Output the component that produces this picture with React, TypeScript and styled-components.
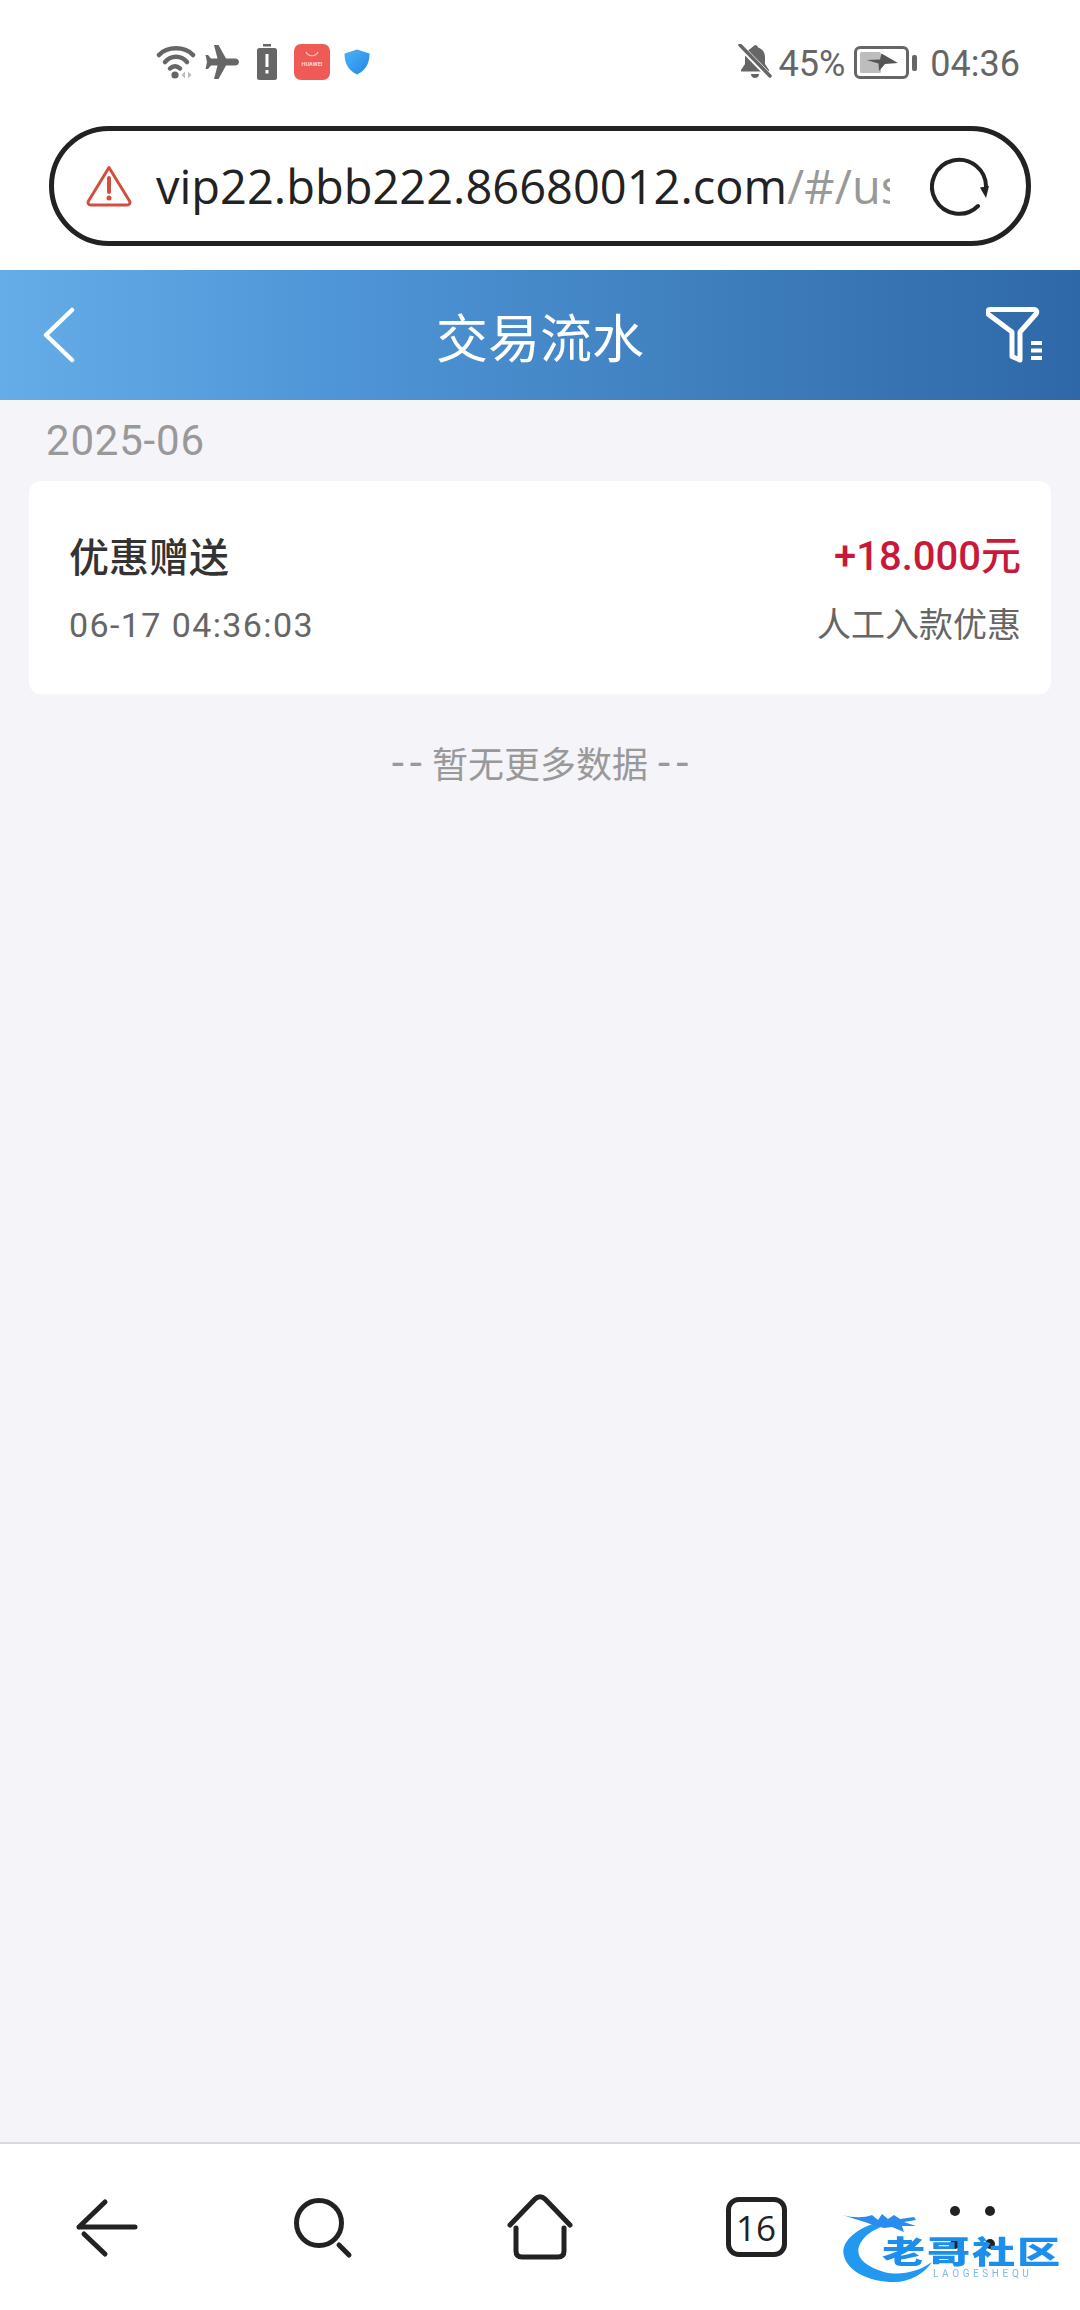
import React from 'react';
import styled, { createGlobalStyle } from 'styled-components';

const GlobalStyle = createGlobalStyle`
  html, body {
    margin: 0;
    padding: 0;
    background: #fff;
  }
  * {
    box-sizing: border-box;
  }
`;

const CJK = `Roboto, "Noto Sans CJK SC", sans-serif`;

const Page = styled.div`
  position: relative;
  width: 1080px;
  height: 2310px;
  display: flex;
  flex-direction: column;
  background: #f4f4f9;
  overflow: hidden;
  font-family: ${CJK};
`;

const StatusBar = styled.div`
  height: 126px;
  flex: none;
  background: #fff;
  display: flex;
  align-items: flex-start;
  justify-content: space-between;
  padding: 40px 60px 0 156px;
`;

const StatusGroup = styled.div`
  display: flex;
  align-items: center;
  height: 44px;
`;

const IconSlot = styled.span<{ $left: number }>`
  display: flex;
  margin-left: ${p => p.$left}px;
`;

const StatusText = styled.span<{ $left: number }>`
  margin: 4px 0 0 ${p => p.$left}px;
  font-size: 36px;
  line-height: 44px;
  color: #666;
`;

const BrowserBar = styled.div`
  height: 144px;
  flex: none;
  background: #fff;
  padding: 0 49px;
`;

const UrlBox = styled.div`
  height: 120px;
  border: 5px solid #222;
  border-radius: 60px;
  display: flex;
  align-items: center;
  padding: 0 36px 0 32px;
`;

const UrlText = styled.div`
  width: 734px;
  margin-left: 24px;
  overflow: hidden;
  white-space: nowrap;
  font-family: "Open Sans", sans-serif;
  font-size: 47px;
  line-height: 60px;
  color: #222;
`;

const UrlPath = styled.span`
  color: #999;
`;

const Reload = styled.div`
  margin-left: auto;
  display: flex;
`;

const Header = styled.header`
  height: 130px;
  flex: none;
  display: grid;
  grid-template-columns: 1fr auto 1fr;
  align-items: center;
  padding: 0 34px;
  background: linear-gradient(90deg, #65ade8 0%, #4f96d8 30%, #3f7fbe 65%, #2f68a8 100%);
`;

const HeaderSide = styled.div<{ $end?: boolean }>`
  display: flex;
  justify-content: ${p => (p.$end ? 'flex-end' : 'flex-start')};
  padding-left: ${p => (p.$end ? 0 : 8)}px;
`;

const HeaderTitle = styled.h1`
  margin: 0;
  font-size: 52px;
  font-weight: 400;
  color: #fff;
`;

const Main = styled.main`
  flex: 1;
  padding: 0 29px;
`;

const MonthLabel = styled.div`
  height: 81px;
  padding: 17px 0 0 17px;
  font-size: 42px;
  line-height: 48px;
  letter-spacing: 0.8px;
  color: #999;
`;

const Card = styled.div`
  height: 213px;
  padding: 5px 30px 0 40px;
  background: #fff;
  border-radius: 12px;
  display: flex;
  flex-direction: column;
  justify-content: center;
  gap: 17px;
`;

const CardRow = styled.div`
  display: flex;
  align-items: center;
  justify-content: space-between;
`;

const TxTitle = styled.span`
  font-size: 40px;
  line-height: 52px;
  font-weight: 500;
  color: #333;
`;

const TxAmount = styled.span`
  margin-top: -3px;
  font-size: 40px;
  line-height: 52px;
  font-weight: 500;
  color: #c9193a;
`;

const TxTime = styled.span`
  font-size: 34px;
  line-height: 46px;
  letter-spacing: 1.4px;
  color: #666;
`;

const TxMeta = styled.span`
  font-size: 34px;
  line-height: 46px;
  color: #666;
`;

const EndNote = styled.div`
  margin-top: 45px;
  display: flex;
  justify-content: center;
  align-items: baseline;
  gap: 4px;
  font-size: 36px;
  line-height: 48px;
  color: #999;
`;

const Dashes = styled.span`
  font-size: 44px;
  letter-spacing: 6px;

  &:last-child {
    margin: 0 -6px 0 6px;
  }
`;

const BottomNav = styled.nav`
  height: 168px;
  flex: none;
  background: #fff;
  border-top: 2px solid #d9d9d9;
  display: grid;
  grid-template-columns: repeat(5, 1fr);
  align-items: center;
  justify-items: center;
`;

const NavItem = styled.div`
  width: 70px;
  height: 70px;
  display: flex;
  align-items: center;
  justify-content: center;
`;

const TabCount = styled.div`
  width: 61px;
  height: 60px;
  border: 5px solid #222;
  border-radius: 13px;
  display: flex;
  align-items: center;
  justify-content: center;
  font-family: "Open Sans", sans-serif;
  font-size: 35px;
  color: #222;
`;

const MoreDots = styled.div`
  width: 45px;
  height: 43px;
  display: grid;
  grid-template-columns: 10px 10px;
  grid-template-rows: 10px 10px;
  justify-content: space-between;
  align-content: space-between;
`;

const Dot = styled.span`
  background: #222;
  border-radius: 50%;
`;

const Watermark = styled.div`
  position: absolute;
  left: 840px;
  top: 2212px;
  width: 230px;
  height: 72px;
  filter: blur(0.5px);
`;

const WatermarkTitle = styled.div`
  position: absolute;
  left: 42px;
  top: 22px;
  font-family: "Noto Sans CJK SC", sans-serif;
  font-size: 36px;
  line-height: 36px;
  font-weight: 900;
  letter-spacing: 1.500px;
  white-space: nowrap;
  color: #1c8fee;
  transform: scale(1.2, 0.85);
  transform-origin: left top;
`;

const WatermarkSub = styled.div`
  position: absolute;
  left: 93px;
  top: 56px;
  font-family: Roboto, sans-serif;
  font-size: 10px;
  line-height: 12px;
  letter-spacing: 3.6px;
  white-space: nowrap;
  color: #7fb8ea;
`;

const WatermarkDragon = styled.svg`
  position: absolute;
  left: 0;
  top: 0;
`;

const WifiIcon = () => (
  <svg width="40" height="36" viewBox="0 0 40 36" fill="none">
    <path d="M3 11C11 2 29 2 37 11" stroke="#666" strokeWidth="4.5" strokeLinecap="round" />
    <path d="M9 18C15 11 25 11 31 18" stroke="#666" strokeWidth="4.5" strokeLinecap="round" />
    <path d="M14 24.500C17 21.500 21 21.500 24 24.500" stroke="#666" strokeWidth="4.500" strokeLinecap="round" />
    <circle cx="19" cy="31" r="3.600" fill="#666" />
    <path d="M29 27.500l-3.500 3.500 3.500 3.500zM32 27.500l3.500 3.500-3.500 3.500z" fill="#bbb" />
  </svg>
);

const PlaneIcon = () => (
  <svg width="34" height="34" viewBox="0 0 34 34">
    <path d="M9 0h4.500l7.500 13.500h9c2.500 0 4 1.800 4 3.500s-1.500 3.500-4 3.500h-9L13.500 34H9l3.500-13.500H6L3 24H0.500L2 17 0.500 10H3l3 3.500h6.500z" fill="#666" />
  </svg>
);

const BatteryAlert = () => (
  <svg width="20" height="36" viewBox="0 0 20 36">
    <rect x="6" y="0" width="8" height="2.500" fill="#666" />
    <rect x="0" y="4" width="20" height="32" rx="2.500" fill="#666" />
    <rect x="8.500" y="10" width="3" height="13" fill="#fff" />
    <rect x="8.500" y="26" width="3" height="3.500" fill="#fff" />
  </svg>
);

const HuaweiBadge = () => (
  <svg width="36" height="36" viewBox="0 0 36 36">
    <rect width="36" height="36" rx="7" fill="#ef5a56" />
    <path d="M12 8c2 5 10 5 12 0" stroke="#f9c9c6" strokeWidth="1.200" fill="none" />
    <text x="18" y="22" textAnchor="middle" fontSize="5.600" fontWeight="700" fontFamily="Roboto, sans-serif" fill="#fbd5d3">
      HUAWEI
    </text>
  </svg>
);

const ShieldIcon = () => (
  <svg width="26" height="26" viewBox="0 0 26 26">
    <defs>
      <linearGradient id="shield" x1="0" y1="0" x2="1" y2="1">
        <stop offset="0" stopColor="#4fb3f5" />
        <stop offset="1" stopColor="#1f86e8" />
      </linearGradient>
    </defs>
    <path d="M13 0.500L25.500 4.500C25.500 14 22 21 13 25.500 4 21 0.500 14 0.500 4.500z" fill="url(#shield)" />
  </svg>
);

const MutedBell = () => (
  <svg width="34" height="36" viewBox="0 0 34 36" fill="none">
    <path d="M17 1c1.600 0 2.800 1 3 2.500 4.500 1.300 7 5 7 9.500v7l4 6v1.500H3V26l4-6v-7c0-1.800.4-3.500 1.200-5z" fill="#666" />
    <path d="M13 30h8c0 2.500-1.800 4-4 4s-4-1.500-4-4z" fill="#666" />
    <path d="M2 2l30 31" stroke="#fff" strokeWidth="6" />
    <path d="M2 1l30 31" stroke="#666" strokeWidth="3.500" strokeLinecap="round" />
  </svg>
);

const ChargingBattery = () => (
  <svg width="64" height="33" viewBox="0 0 64 33" fill="none">
    <rect x="1.500" y="1.500" width="52" height="30" rx="4.500" stroke="#666" strokeWidth="3" />
    <rect x="6" y="6" width="21" height="21" rx="1.500" fill="#bdbdbd" />
    <path d="M12.500 14L26 13.500 27.500 7.500 44 17 31 18 25 25 24.500 17.500z" fill="#555" />
    <rect x="58" y="9" width="5" height="16" rx="2" fill="#666" />
  </svg>
);

const WarnIcon = () => (
  <svg width="46" height="42" viewBox="0 0 46 42" fill="none">
    <path d="M23 2.500L43.500 36c1.200 2-.2 4-2.300 4H4.800c-2.100 0-3.500-2-2.300-4z" stroke="#d24f3f" strokeWidth="3" strokeLinejoin="round" />
    <path d="M23 13v14" stroke="#d24f3f" strokeWidth="4" strokeLinecap="round" />
    <circle cx="23" cy="33" r="2.500" fill="#d24f3f" />
  </svg>
);

const ReloadIcon = () => (
  <svg width="60" height="60" viewBox="0 0 60 60" fill="none">
    <path d="M48 50A27 27 0 1 1 56 32" stroke="#222" strokeWidth="4" strokeLinecap="round" />
    <path d="M50 31.500L59 30 56 42z" fill="#222" />
  </svg>
);

const BackChevron = () => (
  <svg width="34" height="56" viewBox="0 0 34 56" fill="none">
    <path d="M30 3L4 28l26 25" stroke="#fff" strokeWidth="4.500" strokeLinecap="round" strokeLinejoin="round" />
  </svg>
);

const FilterIcon = () => (
  <svg width="60" height="58" viewBox="0 0 60 58" fill="none">
    <path d="M5 2.500h44c2.500 0 3.500 2.500 2 4.500L35 25v28l-8-3.500V25L3 7c-1.500-2 0-4.500 2-4.500z" stroke="#fff" strokeWidth="5" strokeLinejoin="round" transform="translate(-1 1)" />
    <path d="M45 37h11M45 44.500h11M45 52h11" stroke="#fff" strokeWidth="4" />
  </svg>
);

const NavBack = () => (
  <svg width="70" height="70" viewBox="0 0 70 70" fill="none">
    <path d="M6 35h56M6 35L32 10M11 42l21 20" stroke="#222" strokeWidth="5" strokeLinecap="round" />
  </svg>
);

const NavSearch = () => (
  <svg width="70" height="70" viewBox="0 0 70 70" fill="none">
    <circle cx="30" cy="31" r="22.500" stroke="#222" strokeWidth="5" />
    <path d="M50 53l10 10" stroke="#222" strokeWidth="5" strokeLinecap="round" />
  </svg>
);

const NavHome = () => (
  <svg width="70" height="70" viewBox="0 0 70 70" fill="none">
    <path d="M5 33L30 7c3-3 7-3 10 0l25 26" stroke="#222" strokeWidth="5" strokeLinecap="round" />
    <path d="M11 36v23c0 4 2 6 6 6h36c4 0 6-2 6-6V36" stroke="#222" strokeWidth="5" strokeLinecap="round" />
  </svg>
);

const DragonSwoosh = () => (
  <WatermarkDragon width="120" height="72" viewBox="0 0 120 72" fill="none">
    <path d="M40 10C14 16 0 32 4 44c4 16 26 26 50 26 16 0 30-8 38-20C78 60 60 64 44 60 24 54 14 44 20 32c4-8 12-14 24-18z" fill="#2299f0" />
    <path d="M2 3c12 3 22 3 30 0l6 5 4-6 6 5 6-4 6 4 14-2 2 3-12 2 12 4-14 0 2 6-12-5-8 1C36 14 26 10 2 3z" fill="#2a8cec" />
  </WatermarkDragon>
);

const App: React.FC = () => {
  return (
    <Page>
      <GlobalStyle />
      <StatusBar>
        <StatusGroup>
          <WifiIcon />
          <IconSlot $left={9}>
            <PlaneIcon />
          </IconSlot>
          <IconSlot $left={18}>
            <BatteryAlert />
          </IconSlot>
          <IconSlot $left={17}>
            <HuaweiBadge />
          </IconSlot>
          <IconSlot $left={14}>
            <ShieldIcon />
          </IconSlot>
        </StatusGroup>
        <StatusGroup>
          <MutedBell />
          <StatusText $left={7}>45%</StatusText>
          <IconSlot $left={9}>
            <ChargingBattery />
          </IconSlot>
          <StatusText $left={12}>04:36</StatusText>
        </StatusGroup>
      </StatusBar>
      <BrowserBar>
        <UrlBox>
          <WarnIcon />
          <UrlText>
            vip22.bbb222.86680012.com<UrlPath>/#/user/transaction</UrlPath>
          </UrlText>
          <Reload>
            <ReloadIcon />
          </Reload>
        </UrlBox>
      </BrowserBar>
      <Header>
        <HeaderSide>
          <BackChevron />
        </HeaderSide>
        <HeaderTitle>交易流水</HeaderTitle>
        <HeaderSide $end>
          <FilterIcon />
        </HeaderSide>
      </Header>
      <Main>
        <MonthLabel>2025-06</MonthLabel>
        <Card>
          <CardRow>
            <TxTitle>优惠赠送</TxTitle>
            <TxAmount>+18.000元</TxAmount>
          </CardRow>
          <CardRow>
            <TxTime>06-17 04:36:03</TxTime>
            <TxMeta>人工入款优惠</TxMeta>
          </CardRow>
        </Card>
        <EndNote>
          <Dashes>--</Dashes>
          暂无更多数据
          <Dashes>--</Dashes>
        </EndNote>
      </Main>
      <BottomNav>
        <NavItem>
          <NavBack />
        </NavItem>
        <NavItem>
          <NavSearch />
        </NavItem>
        <NavItem>
          <NavHome />
        </NavItem>
        <NavItem>
          <TabCount>16</TabCount>
        </NavItem>
        <NavItem>
          <MoreDots>
            <Dot />
            <Dot />
            <Dot />
            <Dot />
          </MoreDots>
        </NavItem>
      </BottomNav>
      <Watermark>
        <DragonSwoosh />
        <WatermarkTitle>老哥社区</WatermarkTitle>
        <WatermarkSub>LAOGESHEQU</WatermarkSub>
      </Watermark>
    </Page>
  );
};

export default App;
